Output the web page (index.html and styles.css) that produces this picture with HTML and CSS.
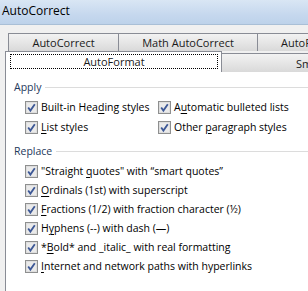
FILE: index.html
```html
<!DOCTYPE html>
<html lang="en">
<head>
    <meta charset="UTF-8">
    <title>AutoCorrect</title>
    <link rel="stylesheet" href="styles.css">
</head>
<body>
    <div class="window">
        <div class="titlebar">AutoCorrect</div>
        <div class="dialog">
            <div class="tabrow back">
                <div class="tab t1">AutoCorrect</div>
                <div class="tab t2">Math AutoCorrect</div>
                <div class="tab t3">AutoFormat As You Type</div>
            </div>
            <div class="tabrow front">
                <div class="tab active"><span class="focus">AutoFormat</span></div>
                <div class="tab t4">Smart Tags</div>
            </div>
            <div class="panel">
                <div class="group">
                    <div class="legend"><span>Apply</span></div>
                    <div class="grid">
                        <label class="check"><svg class="box" viewBox="0 0 13 13"><rect x="0.5" y="0.5" width="12" height="12" fill="#f4f4f4" stroke="#8e8f8f"/><rect x="1.5" y="1.5" width="10" height="10" fill="#eaeaea" stroke="#dedede"/><path d="M3.2 6.4 L5.4 9.6 L9.8 3.2" fill="none" stroke="#3d5896" stroke-width="1.8"/></svg><span>Built-in Hea<u>d</u>ing styles</span></label>
                        <label class="check"><svg class="box" viewBox="0 0 13 13"><rect x="0.5" y="0.5" width="12" height="12" fill="#f4f4f4" stroke="#8e8f8f"/><rect x="1.5" y="1.5" width="10" height="10" fill="#eaeaea" stroke="#dedede"/><path d="M3.2 6.4 L5.4 9.6 L9.8 3.2" fill="none" stroke="#3d5896" stroke-width="1.8"/></svg><span>A<u>u</u>tomatic bulleted lists</span></label>
                        <label class="check"><svg class="box" viewBox="0 0 13 13"><rect x="0.5" y="0.5" width="12" height="12" fill="#f4f4f4" stroke="#8e8f8f"/><rect x="1.5" y="1.5" width="10" height="10" fill="#eaeaea" stroke="#dedede"/><path d="M3.2 6.4 L5.4 9.6 L9.8 3.2" fill="none" stroke="#3d5896" stroke-width="1.8"/></svg><span><u>L</u>ist styles</span></label>
                        <label class="check"><svg class="box" viewBox="0 0 13 13"><rect x="0.5" y="0.5" width="12" height="12" fill="#f4f4f4" stroke="#8e8f8f"/><rect x="1.5" y="1.5" width="10" height="10" fill="#eaeaea" stroke="#dedede"/><path d="M3.2 6.4 L5.4 9.6 L9.8 3.2" fill="none" stroke="#3d5896" stroke-width="1.8"/></svg><span>Other <u>p</u>aragraph styles</span></label>
                    </div>
                </div>
                <div class="group">
                    <div class="legend"><span>Replace</span></div>
                    <div class="list">
                        <label class="check"><svg class="box" viewBox="0 0 13 13"><rect x="0.5" y="0.5" width="12" height="12" fill="#f4f4f4" stroke="#8e8f8f"/><rect x="1.5" y="1.5" width="10" height="10" fill="#eaeaea" stroke="#dedede"/><path d="M3.2 6.4 L5.4 9.6 L9.8 3.2" fill="none" stroke="#3d5896" stroke-width="1.8"/></svg><span>"Straight <u>q</u>uotes" with “smart quotes”</span></label>
                        <label class="check"><svg class="box" viewBox="0 0 13 13"><rect x="0.5" y="0.5" width="12" height="12" fill="#f4f4f4" stroke="#8e8f8f"/><rect x="1.5" y="1.5" width="10" height="10" fill="#eaeaea" stroke="#dedede"/><path d="M3.2 6.4 L5.4 9.6 L9.8 3.2" fill="none" stroke="#3d5896" stroke-width="1.8"/></svg><span><u>O</u>rdinals (1st) with superscript</span></label>
                        <label class="check"><svg class="box" viewBox="0 0 13 13"><rect x="0.5" y="0.5" width="12" height="12" fill="#f4f4f4" stroke="#8e8f8f"/><rect x="1.5" y="1.5" width="10" height="10" fill="#eaeaea" stroke="#dedede"/><path d="M3.2 6.4 L5.4 9.6 L9.8 3.2" fill="none" stroke="#3d5896" stroke-width="1.8"/></svg><span><u>F</u>ractions (1/2) with fraction character (½)</span></label>
                        <label class="check"><svg class="box" viewBox="0 0 13 13"><rect x="0.5" y="0.5" width="12" height="12" fill="#f4f4f4" stroke="#8e8f8f"/><rect x="1.5" y="1.5" width="10" height="10" fill="#eaeaea" stroke="#dedede"/><path d="M3.2 6.4 L5.4 9.6 L9.8 3.2" fill="none" stroke="#3d5896" stroke-width="1.8"/></svg><span>H<u>y</u>phens (--) with dash (—)</span></label>
                        <label class="check"><svg class="box" viewBox="0 0 13 13"><rect x="0.5" y="0.5" width="12" height="12" fill="#f4f4f4" stroke="#8e8f8f"/><rect x="1.5" y="1.5" width="10" height="10" fill="#eaeaea" stroke="#dedede"/><path d="M3.2 6.4 L5.4 9.6 L9.8 3.2" fill="none" stroke="#3d5896" stroke-width="1.8"/></svg><span>*<u>B</u>old* and _italic_ with real formatting</span></label>
                        <label class="check"><svg class="box" viewBox="0 0 13 13"><rect x="0.5" y="0.5" width="12" height="12" fill="#f4f4f4" stroke="#8e8f8f"/><rect x="1.5" y="1.5" width="10" height="10" fill="#eaeaea" stroke="#dedede"/><path d="M3.2 6.4 L5.4 9.6 L9.8 3.2" fill="none" stroke="#3d5896" stroke-width="1.8"/></svg><span><u>I</u>nternet and network paths with hyperlinks</span></label>
                    </div>
                </div>
            </div>
        </div>
    </div>
</body>
</html>
```

FILE: styles.css
```css
body {
    margin: 0;
    font-family: "Open Sans", "Noto Sans", sans-serif;
    font-size: 10.5px;
    color: #000;
    overflow: hidden;
}
.window {
    width: 308px;
    height: 291px;
    background: #f0f0f0;
    overflow: hidden;
}
.titlebar {
    height: 24px;
    line-height: 22px;
    padding-left: 2px;
    font-size: 12px;
    background: linear-gradient(to bottom, #d9e6f4, #c6d8ee 60%, #bdd2ea);
    border-bottom: 1px solid #a9bfd6;
    white-space: nowrap;
}
.dialog {
    padding: 8px 0 0 5px;
}
.tabrow {
    display: flex;
    white-space: nowrap;
    overflow: hidden;
}
.tab {
    flex: none;
    height: 17px;
    line-height: 17px;
    font-size: 11px;
    text-align: center;
    color: #1a1a1a;
    background: linear-gradient(to bottom, #f2f2f2, #e6e6e6 50%, #d9d9d9);
    border: 1px solid #898c95;
    border-bottom: none;
    box-sizing: border-box;
}
.back {
    padding-left: 3px;
    height: 18px;
}
.back .tab {
    height: 18px;
}
.t1 { width: 111px; }
.t2 { width: 140px; margin-left: -1px; }
.t3 { width: 120px; margin-left: -1px; text-align: left; padding-left: 23px; }
.front {
    height: 21px;
    align-items: flex-end;
}
.front .tab.active {
    width: 217px;
    height: 21px;
    background: #fff;
    padding: 2px 3px 0 4px;
    position: relative;
    z-index: 1;
}
.focus {
    display: block;
    height: 15px;
    line-height: 14px;
    border: 1px dotted #000;
    box-sizing: border-box;
}
.t4 {
    width: 100px;
    height: 19px;
    line-height: 19px;
    margin-left: -1px;
    text-align: left;
    padding-left: 74px;
}
.panel {
    background: #fff;
    border-left: 1px solid #898c95;
    border-top: 1px solid #898c95;
    margin-top: -1px;
    height: 230px;
    padding: 7px 0 0 8px;
}
.legend {
    display: flex;
    align-items: center;
    gap: 4px;
    height: 16px;
    color: #1e395b;
}
.legend::after {
    content: "";
    flex: 1;
    border-top: 1px solid #dcdcdc;
}
.grid {
    display: grid;
    grid-template-columns: 133px auto;
    padding: 4px 0 8px 11px;
    row-gap: 4px;
}
.list {
    display: flex;
    flex-direction: column;
    padding: 4px 0 0 11px;
    row-gap: 3px;
}
.check {
    display: flex;
    align-items: center;
    gap: 3px;
    height: 16px;
    white-space: nowrap;
}
.box {
    width: 13px;
    height: 13px;
    flex: none;
}
u {
    text-decoration-thickness: 1px;
    text-underline-offset: 2px;
}
```
